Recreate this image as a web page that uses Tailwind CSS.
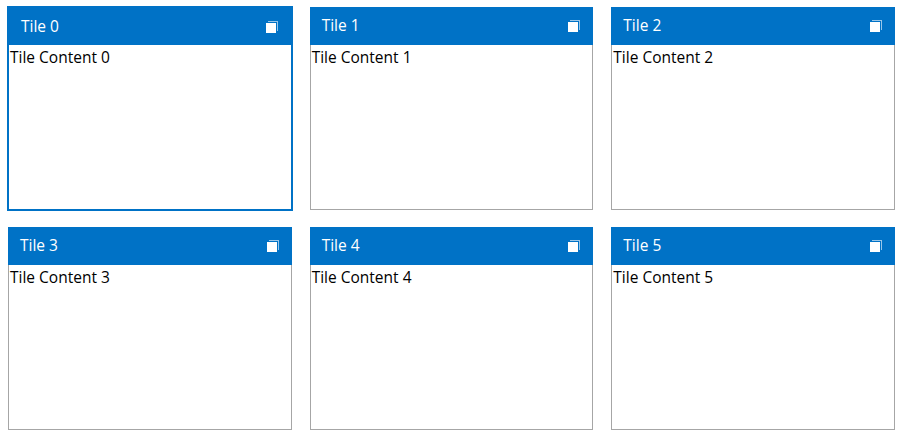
<!DOCTYPE html>
<html><head><meta charset="utf-8"><script src="https://cdn.jsdelivr.net/npm/@tailwindcss/browser@4"></script></head>
<body class="bg-white w-[905px] h-[438px] overflow-hidden font-['Open_Sans',sans-serif]">
<div class="grid grid-cols-3 grid-rows-[203px_203px] gap-x-[18px] gap-y-[17px] pl-2 pr-[10px] pt-[7px]">
<div class="flex flex-col border border-[#0072c6] outline-2 outline-[#0072c6] -outline-offset-1"><div class="flex h-[37px] shrink-0 items-center justify-between bg-[#0072c6] pl-3 pr-3 text-[15.5px] text-white"><span>Tile 0</span><svg width="14" height="14" viewBox="0 0 14 14"><path d="M3 1h10v10h-1V2H3z" fill="#fff" opacity=".6"/><rect x="1" y="3" width="10" height="10" fill="#fff"/></svg></div><div class="pl-px text-[15.5px] leading-[24px] text-black">Tile Content 0</div></div>
<div class="flex flex-col border border-[#a6a6a6] border-t-0"><div class="-mx-px flex h-[38px] shrink-0 items-center justify-between bg-[#0072c6] pl-3 pr-3 text-[15.5px] text-white"><span>Tile 1</span><svg width="14" height="14" viewBox="0 0 14 14"><path d="M3 1h10v10h-1V2H3z" fill="#fff" opacity=".6"/><rect x="1" y="3" width="10" height="10" fill="#fff"/></svg></div><div class="pl-px text-[15.5px] leading-[24px] text-black">Tile Content 1</div></div>
<div class="flex flex-col border border-[#a6a6a6] border-t-0"><div class="-mx-px flex h-[38px] shrink-0 items-center justify-between bg-[#0072c6] pl-3 pr-3 text-[15.5px] text-white"><span>Tile 2</span><svg width="14" height="14" viewBox="0 0 14 14"><path d="M3 1h10v10h-1V2H3z" fill="#fff" opacity=".6"/><rect x="1" y="3" width="10" height="10" fill="#fff"/></svg></div><div class="pl-px text-[15.5px] leading-[24px] text-black">Tile Content 2</div></div>
<div class="flex flex-col border border-[#a6a6a6] border-t-0"><div class="-mx-px flex h-[38px] shrink-0 items-center justify-between bg-[#0072c6] pl-3 pr-3 text-[15.5px] text-white"><span>Tile 3</span><svg width="14" height="14" viewBox="0 0 14 14"><path d="M3 1h10v10h-1V2H3z" fill="#fff" opacity=".6"/><rect x="1" y="3" width="10" height="10" fill="#fff"/></svg></div><div class="pl-px text-[15.5px] leading-[24px] text-black">Tile Content 3</div></div>
<div class="flex flex-col border border-[#a6a6a6] border-t-0"><div class="-mx-px flex h-[38px] shrink-0 items-center justify-between bg-[#0072c6] pl-3 pr-3 text-[15.5px] text-white"><span>Tile 4</span><svg width="14" height="14" viewBox="0 0 14 14"><path d="M3 1h10v10h-1V2H3z" fill="#fff" opacity=".6"/><rect x="1" y="3" width="10" height="10" fill="#fff"/></svg></div><div class="pl-px text-[15.5px] leading-[24px] text-black">Tile Content 4</div></div>
<div class="flex flex-col border border-[#a6a6a6] border-t-0"><div class="-mx-px flex h-[38px] shrink-0 items-center justify-between bg-[#0072c6] pl-3 pr-3 text-[15.5px] text-white"><span>Tile 5</span><svg width="14" height="14" viewBox="0 0 14 14"><path d="M3 1h10v10h-1V2H3z" fill="#fff" opacity=".6"/><rect x="1" y="3" width="10" height="10" fill="#fff"/></svg></div><div class="pl-px text-[15.5px] leading-[24px] text-black">Tile Content 5</div></div>
</div>
</body></html>
